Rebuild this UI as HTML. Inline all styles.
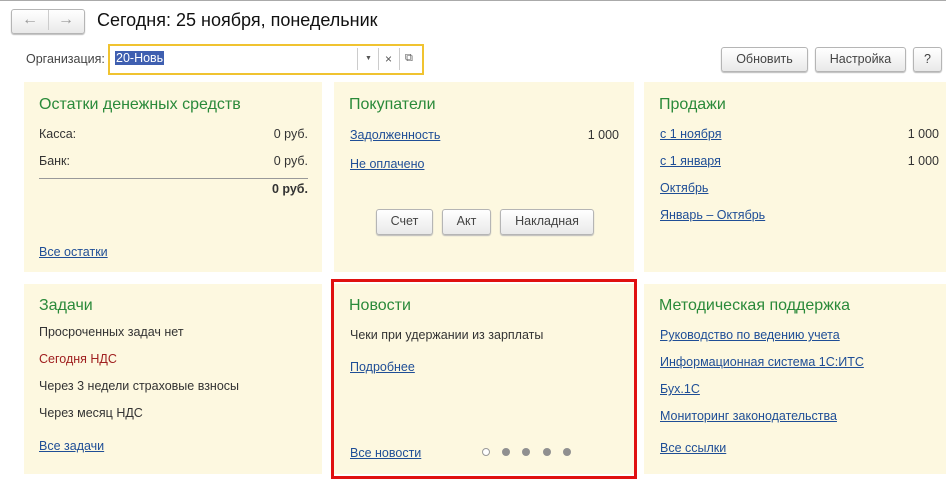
<!DOCTYPE html>
<html><head><meta charset="utf-8"><style>
body{margin:0;width:946px;height:484px;background:#fff;position:relative;overflow:hidden;font-family:Arial,"Liberation Sans",sans-serif;font-size:12.5px;color:#333}
.a{position:absolute;white-space:nowrap}
.p{position:absolute;background:#fdf8e0}
.h{position:absolute;color:#2a8a3a;font-size:16px;white-space:nowrap}
.l{position:absolute;color:#1f4e96;text-decoration:underline;white-space:nowrap}
.b{position:absolute;border:1px solid #b5b5b5;border-radius:3px;background:linear-gradient(#fff,#e9e9e9);box-shadow:0 1px 1px #bbb;text-align:center;color:#444;font-size:12.5px;line-height:22px}
.r{position:absolute;text-align:right;white-space:nowrap}
.d{position:absolute;width:8px;height:8px;border-radius:50%;background:#909090;top:448px}
</style></head><body>
<div class="a" style="left:0;top:0;width:946px;height:1px;background:#aaa"></div>
<div class="b" style="left:11px;top:9px;width:72px;height:23px;line-height:20px;color:#999;font-size:16px"><span style="display:inline-block;width:35px;border-right:1px solid #ccc">&#8592;</span><span style="display:inline-block;width:35px">&#8594;</span></div>
<div class="a" style="left:97px;top:10px;font-size:18px;color:#111">Сегодня: 25 ноября, понедельник</div>
<div class="a" style="left:26px;top:52px;color:#444">Организация:</div>
<div class="a" style="left:108px;top:44px;width:312px;height:27px;border:2px solid #f0c330;background:#fff"></div>
<div class="a" style="left:115px;top:51px;background:#3f5fb0;color:#fff;padding:0 1px">20-Новь</div>
<div class="a" style="left:357px;top:48px;width:1px;height:22px;background:#ccc"></div>
<div class="a" style="left:378px;top:48px;width:1px;height:22px;background:#ccc"></div>
<div class="a" style="left:399px;top:48px;width:1px;height:22px;background:#ccc"></div>
<div class="a" style="left:365px;top:55px;font-size:7px;color:#555">&#9660;</div>
<div class="a" style="left:385px;top:52px;font-size:12px;color:#555">×</div>
<div class="a" style="left:405px;top:52px;font-size:11px;color:#555">⧉</div>
<div class="b" style="left:721px;top:47px;width:85px;height:23px">Обновить</div>
<div class="b" style="left:815px;top:47px;width:89px;height:23px">Настройка</div>
<div class="b" style="left:913px;top:47px;width:27px;height:23px">?</div>

<div class="p" style="left:24px;top:82px;width:298px;height:190px"></div>
<div class="p" style="left:334px;top:82px;width:300px;height:190px"></div>
<div class="p" style="left:644px;top:82px;width:302px;height:190px"></div>
<div class="p" style="left:24px;top:284px;width:298px;height:190px"></div>
<div class="p" style="left:334px;top:284px;width:300px;height:190px"></div>
<div class="p" style="left:644px;top:284px;width:302px;height:190px"></div>
<div class="a" style="left:331px;top:279px;width:300px;height:194px;border:3px solid #e01010"></div>

<div class="h" style="left:39px;top:96px">Остатки денежных средств</div>
<div class="a" style="left:39px;top:127px">Касса:</div><div class="r" style="right:638px;top:127px">0 руб.</div>
<div class="a" style="left:39px;top:154px">Банк:</div><div class="r" style="right:638px;top:154px">0 руб.</div>
<div class="a" style="left:39px;top:178px;width:269px;height:1px;background:#999"></div>
<div class="r" style="right:638px;top:182px;font-weight:bold">0 руб.</div>
<div class="l" style="left:39px;top:245px">Все остатки</div>

<div class="h" style="left:349px;top:96px">Покупатели</div>
<div class="l" style="left:350px;top:128px">Задолженность</div><div class="r" style="right:327px;top:128px">1 000</div>
<div class="l" style="left:350px;top:157px">Не оплачено</div>
<div class="b" style="left:376px;top:209px;width:55px;height:24px">Счет</div>
<div class="b" style="left:442px;top:209px;width:47px;height:24px">Акт</div>
<div class="b" style="left:500px;top:209px;width:92px;height:24px">Накладная</div>

<div class="h" style="left:659px;top:96px">Продажи</div>
<div class="l" style="left:660px;top:127px">с 1 ноября</div><div class="r" style="right:7px;top:127px">1 000</div>
<div class="l" style="left:660px;top:154px">с 1 января</div><div class="r" style="right:7px;top:154px">1 000</div>
<div class="l" style="left:660px;top:181px">Октябрь</div>
<div class="l" style="left:660px;top:208px">Январь – Октябрь</div>

<div class="h" style="left:39px;top:297px">Задачи</div>
<div class="a" style="left:39px;top:325px">Просроченных задач нет</div>
<div class="a" style="left:39px;top:352px;color:#a02020">Сегодня НДС</div>
<div class="a" style="left:39px;top:379px">Через 3 недели страховые взносы</div>
<div class="a" style="left:39px;top:406px">Через месяц НДС</div>
<div class="l" style="left:39px;top:439px">Все задачи</div>

<div class="h" style="left:349px;top:297px">Новости</div>
<div class="a" style="left:350px;top:328px">Чеки при удержании из зарплаты</div>
<div class="l" style="left:350px;top:360px">Подробнее</div>
<div class="l" style="left:350px;top:446px">Все новости</div>
<div class="d" style="left:482px;background:#fff;border:1px solid #999;width:6px;height:6px"></div>
<div class="d" style="left:502px"></div><div class="d" style="left:522px"></div><div class="d" style="left:543px"></div><div class="d" style="left:563px"></div>

<div class="h" style="left:659px;top:297px">Методическая поддержка</div>
<div class="l" style="left:660px;top:328px">Руководство по ведению учета</div>
<div class="l" style="left:660px;top:355px">Информационная система 1С:ИТС</div>
<div class="l" style="left:660px;top:382px">Бух.1С</div>
<div class="l" style="left:660px;top:409px">Мониторинг законодательства</div>
<div class="l" style="left:660px;top:441px">Все ссылки</div>
</body></html>
